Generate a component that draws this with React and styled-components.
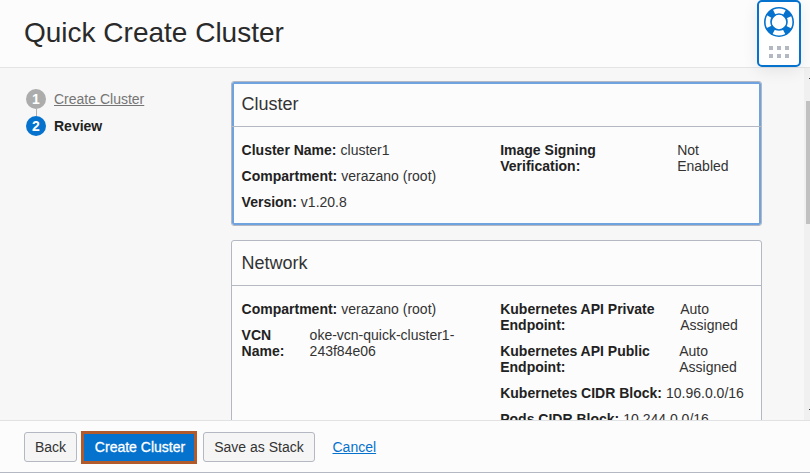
import React from "react";
import styled, { createGlobalStyle } from "styled-components";

const GlobalStyle = createGlobalStyle`
  * { box-sizing: border-box; }
  html, body { margin: 0; padding: 0; overflow: hidden; }
  body { font-family: "Liberation Sans", Arial, sans-serif; font-size: 14px; color: #222; background: #fcfcfc; }
`;

const Page = styled.div`
  position: relative;
  width: 810px;
  height: 473px;
  display: flex;
  flex-direction: column;
  background: #fcfcfc;
  border-bottom: 1px solid #b3b8c2;
`;

const Header = styled.header`
  flex: none;
  height: 68px;
  padding: 0 24px 1px;
  display: flex;
  align-items: center;
  border-bottom: 1px solid #e3e4e5;
`;

const Title = styled.h1`
  margin: 0;
  font-size: 28px;
  line-height: 32px;
  font-weight: 400;
  color: #2a2a2a;
  white-space: nowrap;
`;

const Body = styled.main`
  flex: none;
  height: 352px;
  display: flex;
  overflow: hidden;
  background: #f7f7f7;
`;

const Steps = styled.nav`
  flex: none;
  width: 231px;
  padding: 21px 0 0 26px;
`;

const Step = styled.div`
  display: flex;
  align-items: center;
  gap: 8px;
  height: 20px;
  line-height: 16px;
`;

const Connector = styled.div`
  width: 1px;
  height: 7px;
  margin-left: 10px;
  background: #b0b0b0;
`;

const StepNumber = styled.span`
  width: 20px;
  height: 20px;
  border-radius: 50%;
  background: ${(p) => (p.$active ? "#0572ce" : "#acacac")};
  color: #fff;
  font-weight: 700;
  line-height: 20px;
  text-align: center;
`;

const StepLink = styled.a`
  color: #757575;
  text-decoration: underline;
`;

const StepLabel = styled.span`
  font-weight: 700;
`;

const Panels = styled.div`
  flex: none;
  width: 573px;
  padding-top: 13px;
  display: flex;
  flex-direction: column;
  gap: 14px;
`;

const Card = styled.section`
  position: relative;
  flex: none;
  width: 531px;
  border: 1px solid #b3b8c2;
  border-radius: 3px;
  background: #fcfcfc;
  box-shadow: ${(p) => (p.$focused ? "inset 0 0 0 2px #6ea3e0" : "none")};
`;

const CardTitle = styled.h2`
  margin: 0;
  height: 45px;
  padding: 0 9.6px;
  border-bottom: 1px solid #b3b8c2;
  color: #333;
  font-size: 18px;
  font-weight: 400;
  line-height: 44px;
`;

const Columns = styled.div`
  display: grid;
  grid-template-columns: 258.6px 262px;
  padding: 15px 0 15px 9.6px;
`;

const Column = styled.dl`
  margin: 0;
  display: flex;
  flex-direction: column;
  gap: 10px;
`;

const Field = styled.div`
  display: flex;
  line-height: 16px;
  white-space: nowrap;
`;

const Term = styled.dt`
  flex: none;
  width: ${(p) => (p.$width ? `${p.$width}px` : "auto")};
  margin-right: ${(p) => (p.$width ? 0 : 4)}px;
  font-weight: 700;
  white-space: pre-line;
`;

const Value = styled.dd`
  margin: 0;
  color: #333;
  white-space: pre-line;
`;

const ScrollTrack = styled.div`
  width: 6px;
  height: 352px;
  padding: 33px 0 0 2px;
  background: #f0f0f0;
`;

const ScrollThumb = styled.div`
  height: 123px;
  background: #c1c1c1;
`;

const ScrollArrow = styled.span`
  position: absolute;
  left: 809px;
  top: ${(p) => p.$top}px;
  width: 1px;
  height: 1px;
  background: #444;
`;

const Footer = styled.footer`
  flex: none;
  height: 52px;
  padding: 10px 24px 0;
  display: flex;
  align-items: flex-start;
  border-top: 1px solid #e1e2e4;
`;

const Button = styled.button`
  width: ${(p) => p.$width}px;
  height: 30px;
  margin: 1px 0 0;
  padding: 0;
  border: 1px solid #b3b8c2;
  border-radius: 3px;
  background: #f5f5f5;
  color: #333;
  font: 14px/16px "Liberation Sans", Arial, sans-serif;
  white-space: nowrap;
`;

const PrimaryButton = styled(Button)`
  height: 33px;
  margin: 0 6px 0 4px;
  padding: 0 0 1px 2px;
  border: 3px solid #b15a2b;
  border-radius: 0;
  background: #0572ce;
  color: #fff;
  -webkit-text-stroke: 0.3px #fff;
`;

const CancelLink = styled.a`
  margin: 8px 0 0 17.5px;
  color: #0572ce;
  line-height: 16px;
  text-decoration: underline;
`;

const HelpWidget = styled.aside`
  position: absolute;
  left: 757px;
  top: 0;
  width: 44px;
  height: 67px;
  display: flex;
  flex-direction: column;
  align-items: center;
  padding-top: 5px;
  border: 2px solid #0572ce;
  border-radius: 5px;
  background: #fff;
  box-shadow: 0 4px 16px rgba(0, 0, 0, 0.08);
`;

const DotGrid = styled.div`
  display: grid;
  grid-template-columns: repeat(3, 4px);
  gap: 4px;
  margin-top: 9px;
`;

const Dot = styled.i`
  width: 4px;
  height: 4px;
  background: #b3b8c2;
`;

function LifeRing() {
  return (
    <svg width="30" height="30" viewBox="0 0 30 30" fill="none" stroke="#0572ce">
      <circle cx="15" cy="15" r="11" strokeWidth="7.4" strokeDasharray="6.6 10.679" strokeDashoffset="-5.34" />
      <circle cx="15" cy="15" r="14.2" strokeWidth="1.6" />
      <circle cx="15" cy="15" r="8" strokeWidth="1.6" />
    </svg>
  );
}

function Panel({ title, columns, focused }) {
  return (
    <Card $focused={focused}>
      <CardTitle>{title}</CardTitle>
      <Columns>
        {columns.map((fields, i) => (
          <Column key={i}>
            {fields.map(([term, value, width]) => (
              <Field key={term}>
                <Term $width={width}>{term}</Term>
                <Value>{value}</Value>
              </Field>
            ))}
          </Column>
        ))}
      </Columns>
    </Card>
  );
}

const clusterFields = [
  [
    ["Cluster Name:", "cluster1"],
    ["Compartment:", "verazano (root)"],
    ["Version:", "v1.20.8"],
  ],
  [["Image Signing\nVerification:", "Not\nEnabled", 177]],
];

const networkFields = [
  [
    ["Compartment:", "verazano (root)"],
    ["VCN\nName:", "oke-vcn-quick-cluster1-\n243f84e06", 68],
  ],
  [
    ["Kubernetes API Private\nEndpoint:", "Auto\nAssigned", 180],
    ["Kubernetes API Public\nEndpoint:", "Auto\nAssigned", 179],
    ["Kubernetes CIDR Block:", "10.96.0.0/16"],
    ["Pods CIDR Block:", "10.244.0.0/16"],
  ],
];

export default function App() {
  return (
    <>
      <GlobalStyle />
      <Page>
        <Header>
          <Title>Quick Create Cluster</Title>
        </Header>
        <Body>
          <Steps>
            <Step>
              <StepNumber>1</StepNumber>
              <StepLink>Create Cluster</StepLink>
            </Step>
            <Connector />
            <Step>
              <StepNumber $active>2</StepNumber>
              <StepLabel>Review</StepLabel>
            </Step>
          </Steps>
          <Panels>
            <Panel title="Cluster" columns={clusterFields} focused />
            <Panel title="Network" columns={networkFields} />
          </Panels>
          <ScrollTrack>
            <ScrollThumb />
          </ScrollTrack>
        </Body>
        <Footer>
          <Button $width={53}>Back</Button>
          <PrimaryButton $width={116}>Create Cluster</PrimaryButton>
          <Button $width={112}>Save as Stack</Button>
          <CancelLink>Cancel</CancelLink>
        </Footer>
        <HelpWidget>
          <LifeRing />
          <DotGrid>
            {Array.from({ length: 6 }, (_, i) => (
              <Dot key={i} />
            ))}
          </DotGrid>
        </HelpWidget>
        <ScrollArrow $top={78} />
        <ScrollArrow $top={409} />
      </Page>
    </>
  );
}
